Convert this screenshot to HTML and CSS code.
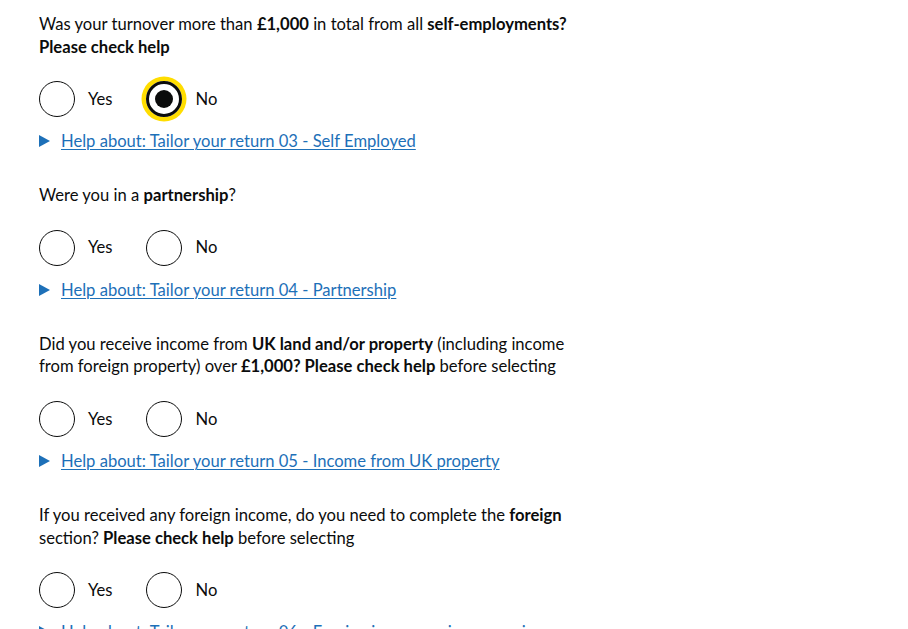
FILE: index.html
```html
<!DOCTYPE html>
<html lang="en">
<head>
<meta charset="utf-8">
<title>Tailor your return</title>
<link rel="stylesheet" href="styles.css">
</head>
<body>
<main class="page">
  <div class="form-group">
    <fieldset class="fieldset">
      <legend class="legend">Was your turnover more than <b>£1,000</b> in total from all <b>self-employments? Please check help</b></legend>
      <div class="radios">
        <div class="radio-item"><span class="radio-circle"></span><span class="radio-label">Yes</span></div>
        <div class="radio-item"><span class="radio-circle is-checked"></span><span class="radio-label">No</span></div>
      </div>
    </fieldset>
    <details class="details"><summary class="summary"><span class="summary-text">Help about: Tailor your return 03 - Self Employed</span></summary></details>
  </div>

  <div class="form-group">
    <fieldset class="fieldset">
      <legend class="legend">Were you in a <b>partnership</b>?</legend>
      <div class="radios">
        <div class="radio-item"><span class="radio-circle"></span><span class="radio-label">Yes</span></div>
        <div class="radio-item"><span class="radio-circle"></span><span class="radio-label">No</span></div>
      </div>
    </fieldset>
    <details class="details"><summary class="summary"><span class="summary-text">Help about: Tailor your return 04 - Partnership</span></summary></details>
  </div>

  <div class="form-group">
    <fieldset class="fieldset">
      <legend class="legend">Did you receive income from <b>UK land and/or property</b> (including income from foreign property) over <b>£1,000? Please check help</b> before selecting</legend>
      <div class="radios">
        <div class="radio-item"><span class="radio-circle"></span><span class="radio-label">Yes</span></div>
        <div class="radio-item"><span class="radio-circle"></span><span class="radio-label">No</span></div>
      </div>
    </fieldset>
    <details class="details"><summary class="summary"><span class="summary-text">Help about: Tailor your return 05 - Income from UK property</span></summary></details>
  </div>

  <div class="form-group">
    <fieldset class="fieldset">
      <legend class="legend">If you received any foreign income, do you need to complete the <b>foreign</b> section? <b>Please check help</b> before selecting</legend>
      <div class="radios">
        <div class="radio-item"><span class="radio-circle"></span><span class="radio-label">Yes</span></div>
        <div class="radio-item"><span class="radio-circle"></span><span class="radio-label">No</span></div>
      </div>
    </fieldset>
    <details class="details"><summary class="summary"><span class="summary-text">Help about: Tailor your return 06 - Foreign income or income gains</span></summary></details>
  </div>
</main>
</body>
</html>
```
FILE: styles.css
```css
html, body {
  margin: 0;
  padding: 0;
  background: #ffffff;
}
body {
  font-family: "Lato", "Liberation Sans", sans-serif;
  font-size: 16.6px;
  line-height: 22.5px;
  color: #0b0c0c;
}
.page {
  padding: 13.3px 0 0 39px;
  width: 560px;
}
.form-group {
  margin-bottom: 31.8px;
}
.fieldset {
  margin: 0;
  padding: 0;
  border: 0;
  min-width: 0;
}
.legend {
  padding: 0;
  margin: 0 0 22.8px;
  width: 560px;
}
.legend b {
  font-weight: 700;
}
.radios {
  display: flex;
  gap: 34px;
}
.radio-item {
  display: flex;
  align-items: center;
  height: 36px;
}
.radio-circle {
  box-sizing: border-box;
  width: 36px;
  height: 36px;
  border: 1.8px solid #0b0c0c;
  border-radius: 50%;
  position: relative;
  flex: none;
}
.radio-circle.is-checked {
  border-width: 3.6px;
  box-shadow: 0 0 0 4.5px #ffdd00;
}
.radio-circle.is-checked::after {
  content: "";
  position: absolute;
  left: 50%;
  top: 50%;
  width: 18px;
  height: 18px;
  margin: -9px 0 0 -9px;
  border-radius: 50%;
  background: #0b0c0c;
}
.radio-label {
  margin-left: 13px;
}
.details {
  margin-top: 13px;
}
.summary {
  list-style: none;
  display: flex;
  align-items: center;
  color: #1d70b8;
  cursor: pointer;
}
.summary::-webkit-details-marker {
  display: none;
}
.summary::before {
  content: "";
  width: 0;
  height: 0;
  border-style: solid;
  border-width: 6px 0 6px 11px;
  border-color: transparent transparent transparent #1d70b8;
  margin-right: 11px;
  flex: none;
}
.summary-text {
  text-decoration: underline;
  text-underline-offset: 2px;
  text-decoration-thickness: 1px;
}
```
